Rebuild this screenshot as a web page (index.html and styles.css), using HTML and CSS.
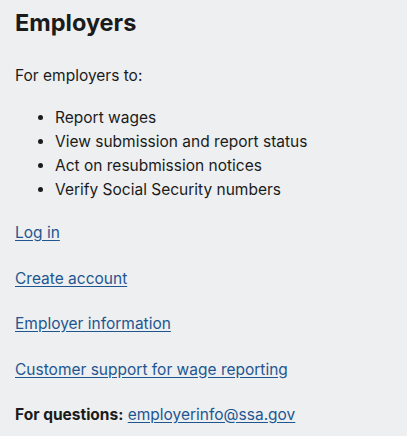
FILE: index.html
```html
<!DOCTYPE html>
<html>
<head>
<meta charset="utf-8">
<title>Employers</title>
<link rel="stylesheet" href="styles.css">
</head>
<body>
<div class="panel">
<h2 class="panel_title">Employers</h2>
<p class="panel_intro">For employers to:</p>
<ul class="panel_list">
<li>Report wages</li>
<li>View submission and report status</li>
<li>Act on resubmission notices</li>
<li>Verify Social Security numbers</li>
</ul>
<p class="panel_link"><a href="#">Log in</a></p>
<p class="panel_link"><a href="#">Create account</a></p>
<p class="panel_link"><a href="#">Employer information</a></p>
<p class="panel_link"><a href="#">Customer support for wage reporting</a></p>
<p class="panel_contact"><strong>For questions:</strong> <a href="#">employerinfo@ssa.gov</a></p>
</div>
</body>
</html>
```

FILE: styles.css
```css
body{
margin: 0;
background-color: #edeff1;
font-family: "Inter", "Open Sans", sans-serif;
color: #1b1b1b;
}

.panel{
padding: 8px 15px 0 15px;
}

.panel_title{
font-size: 23.5px;
font-weight: 700;
line-height: 30px;
margin: 0 0 26px 0;
}

.panel_intro{
font-size: 15.5px;
line-height: 24px;
margin: 0 0 18px 0;
}

.panel_list{
font-size: 15.5px;
line-height: 24px;
margin: 0 0 19px 0;
padding-left: 40px;
}

.panel_link{
font-size: 15.5px;
line-height: 24px;
margin: 0 0 21.5px 0;
}

.panel_contact{
font-size: 15.5px;
line-height: 24px;
margin: 0;
}

a{
color: #1f5690;
text-decoration: underline;
text-underline-offset: 2px;
}
```
